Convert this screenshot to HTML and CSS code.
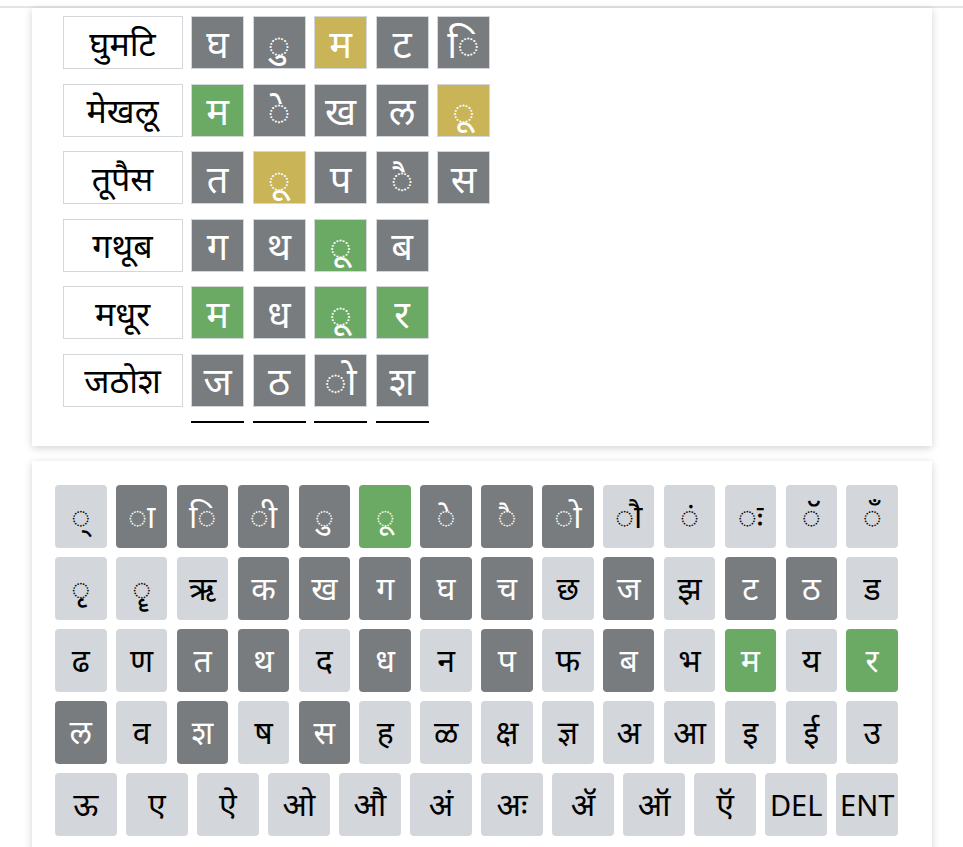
FILE: index.html
```html
<!DOCTYPE html>
<html lang="mr">
<head>
<meta charset="utf-8">
<title>शब्दखेळ</title>
<link rel="stylesheet" href="styles.css">
</head>
<body>
<div class="topbar"></div>
<main class="page">
  <section class="card board">
    <div class="row">
      <div class="word">घुमटि</div>
      <div class="tile absent">घ</div>
      <div class="tile absent">ु</div>
      <div class="tile present">म</div>
      <div class="tile absent">ट</div>
      <div class="tile absent">ि</div>
    </div>
    <div class="row">
      <div class="word">मेखलू</div>
      <div class="tile correct">म</div>
      <div class="tile absent">े</div>
      <div class="tile absent">ख</div>
      <div class="tile absent">ल</div>
      <div class="tile present">ू</div>
    </div>
    <div class="row">
      <div class="word">तूपैस</div>
      <div class="tile absent">त</div>
      <div class="tile present">ू</div>
      <div class="tile absent">प</div>
      <div class="tile absent">ै</div>
      <div class="tile absent">स</div>
    </div>
    <div class="row">
      <div class="word">गथूब</div>
      <div class="tile absent">ग</div>
      <div class="tile absent">थ</div>
      <div class="tile correct">ू</div>
      <div class="tile absent">ब</div>
    </div>
    <div class="row">
      <div class="word">मधूर</div>
      <div class="tile correct">म</div>
      <div class="tile absent">ध</div>
      <div class="tile correct">ू</div>
      <div class="tile correct">र</div>
    </div>
    <div class="row">
      <div class="word">जठोश</div>
      <div class="tile absent">ज</div>
      <div class="tile absent">ठ</div>
      <div class="tile absent">ो</div>
      <div class="tile absent">श</div>
    </div>
    <div class="slots">
      <span class="slot"></span>
      <span class="slot"></span>
      <span class="slot"></span>
      <span class="slot"></span>
    </div>
  </section>

  <section class="card keyboard">
    <div class="krow">
      <button class="key">्</button>
      <button class="key absent">ा</button>
      <button class="key absent">ि</button>
      <button class="key absent">ी</button>
      <button class="key absent">ु</button>
      <button class="key correct">ू</button>
      <button class="key absent">े</button>
      <button class="key absent">ै</button>
      <button class="key absent">ो</button>
      <button class="key">ौ</button>
      <button class="key">ं</button>
      <button class="key">ः</button>
      <button class="key">ॅ</button>
      <button class="key">ँ</button>
    </div>
    <div class="krow">
      <button class="key">ृ</button>
      <button class="key">ॄ</button>
      <button class="key">ऋ</button>
      <button class="key absent">क</button>
      <button class="key absent">ख</button>
      <button class="key absent">ग</button>
      <button class="key absent">घ</button>
      <button class="key absent">च</button>
      <button class="key">छ</button>
      <button class="key absent">ज</button>
      <button class="key">झ</button>
      <button class="key absent">ट</button>
      <button class="key absent">ठ</button>
      <button class="key">ड</button>
    </div>
    <div class="krow">
      <button class="key">ढ</button>
      <button class="key">ण</button>
      <button class="key absent">त</button>
      <button class="key absent">थ</button>
      <button class="key">द</button>
      <button class="key absent">ध</button>
      <button class="key">न</button>
      <button class="key absent">प</button>
      <button class="key">फ</button>
      <button class="key absent">ब</button>
      <button class="key">भ</button>
      <button class="key correct">म</button>
      <button class="key">य</button>
      <button class="key correct">र</button>
    </div>
    <div class="krow">
      <button class="key absent">ल</button>
      <button class="key">व</button>
      <button class="key absent">श</button>
      <button class="key">ष</button>
      <button class="key absent">स</button>
      <button class="key">ह</button>
      <button class="key">ळ</button>
      <button class="key">क्ष</button>
      <button class="key">ज्ञ</button>
      <button class="key">अ</button>
      <button class="key">आ</button>
      <button class="key">इ</button>
      <button class="key">ई</button>
      <button class="key">उ</button>
    </div>
    <div class="krow">
      <button class="key">ऊ</button>
      <button class="key">ए</button>
      <button class="key">ऐ</button>
      <button class="key">ओ</button>
      <button class="key">औ</button>
      <button class="key">अं</button>
      <button class="key">अः</button>
      <button class="key">ॲ</button>
      <button class="key">ऑ</button>
      <button class="key">ऍ</button>
      <button class="key latin">DEL</button>
      <button class="key latin">ENT</button>
    </div>
  </section>
</main>
</body>
</html>
```

FILE: styles.css
```css
html, body {
  margin: 0;
  padding: 0;
  background: #ffffff;
  font-family: "Noto Sans", "Liberation Sans", sans-serif;
  color: #000000;
}

.topbar {
  height: 6px;
  border-bottom: 2px solid #e4e4e4;
}

.page {
  width: 900px;
  margin: 0 auto;
  display: flex;
  flex-direction: column;
  gap: 15px;
}

.card {
  background: #ffffff;
  box-shadow: 0 2px 8px rgba(0, 0, 0, 0.18);
}

.board {
  padding: 8px 31px 22.6px 31px;
  display: flex;
  flex-direction: column;
  gap: 14.5px;
}

.row {
  display: flex;
  gap: 8.5px;
  height: 53px;
}

.word {
  box-sizing: border-box;
  width: 120px;
  height: 53px;
  border: 1px solid #d3d6da;
  display: flex;
  align-items: center;
  justify-content: center;
  font-size: 34px;
  line-height: 1;
  white-space: nowrap;
}

.tile {
  box-sizing: border-box;
  width: 53px;
  height: 53px;
  border: 1px solid #d3d6da;
  display: flex;
  align-items: center;
  justify-content: center;
  color: #ffffff;
  font-size: 38px;
  line-height: 1;
}

.tile.absent { background: #787c7e; }
.tile.present { background: #c9b458; }
.tile.correct { background: #6aaa64; }

.slots {
  display: flex;
  gap: 8.5px;
  margin-left: 128.5px;
  height: 2px;
}

.slot {
  width: 53px;
  height: 2px;
  background: #000000;
}

.keyboard {
  padding: 24.4px 33.5px 24px 23.5px;
  display: flex;
  flex-direction: column;
  gap: 9.4px;
}

.krow {
  display: flex;
  gap: 9.3px;
}

.key {
  flex: 1 1 0;
  min-width: 0;
  height: 62.6px;
  border: none;
  border-radius: 4px;
  background: #d3d6da;
  color: #000000;
  font-family: inherit;
  font-size: 32px;
  line-height: 1;
  padding: 0;
  display: flex;
  align-items: center;
  justify-content: center;
  white-space: nowrap;
}

.key.absent { background: #787c7e; color: #ffffff; }
.key.correct { background: #6aaa64; color: #ffffff; }

.key.latin {
  font-size: 29px;
}
```
